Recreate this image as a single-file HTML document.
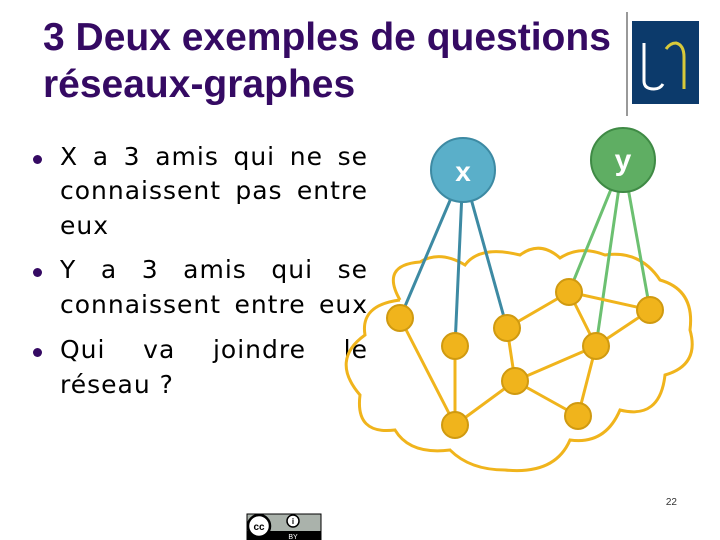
<!DOCTYPE html>
<html><head><meta charset="utf-8"><style>
body{margin:0;width:720px;height:540px;background:#fff;position:relative;overflow:hidden;font-family:"Liberation Sans",sans-serif}
.t{position:absolute;left:43px;font-weight:bold;font-size:39px;color:#350a63;white-space:nowrap}
.l{position:absolute;left:60px;width:308px;font-family:"DejaVu Sans","Liberation Sans",sans-serif;font-size:25px;letter-spacing:1px;color:#000;white-space:nowrap}
.j{text-align:justify;text-align-last:justify}
.b{position:absolute;left:33px;width:9px;height:9px;border-radius:50%;background:#350a63}
</style></head><body>
<div class="t" style="top:16px">3 Deux exemples de questions</div>
<div class="t" style="top:63px">réseaux-graphes</div>
<div style="position:absolute;left:626px;top:12px;width:2px;height:104px;background:#999"></div>
<div style="position:absolute;left:632px;top:21px;width:67px;height:83px;background:#0c3a6b"></div>
<svg style="position:absolute;left:632px;top:21px" width="67" height="83"><path d="M12 22 V60 Q12 68 22 68 Q28 68 31 63" stroke="#fff" stroke-width="3" fill="none"/><path d="M34 28 Q38 22 44 22 Q52 24 52 36 V68" stroke="#d8c93a" stroke-width="3" fill="none"/></svg>

<div class="b" style="top:155px"></div>
<div class="l j" style="top:142px">X a 3 amis qui ne se</div>
<div class="l j" style="top:176px">connaissent pas entre</div>
<div class="l" style="top:211px">eux</div>
<div class="b" style="top:268px"></div>
<div class="l j" style="top:255px">Y a 3 amis qui se</div>
<div class="l j" style="top:290px">connaissent entre eux</div>
<div class="b" style="top:348px"></div>
<div class="l j" style="top:335px">Qui va joindre le</div>
<div class="l" style="top:370px">réseau ?</div>

<svg style="position:absolute;left:0;top:0" width="720" height="540">
<g fill="none" stroke="#f0b41c" stroke-width="3">
<path d="M400 300 Q380 265 420 262 Q440 250 465 265 Q480 245 520 255 Q540 240 560 258 Q580 245 605 255 Q640 250 660 280 Q695 290 690 330 Q700 365 665 375 Q660 420 620 410 Q605 445 570 440 Q555 475 505 470 Q470 470 450 450 Q410 455 395 430 Q355 435 360 395 Q330 360 365 335 Q360 305 400 300"/>
</g>
<g stroke-width="3" fill="none">
<path d="M463 170 L400 318 M463 170 L455 346 M463 170 L507 328" stroke="#3d8aa3"/>
<path d="M623 160 L569 292 M623 160 L596 346 M623 160 L650 310" stroke="#6cc071"/>
<path d="M400 318 L455 425 M455 346 L455 425 M455 425 L515 381 M507 328 L515 381 M507 328 L569 292 M569 292 L650 310 M569 292 L596 346 M650 310 L596 346 M596 346 L515 381 M596 346 L578 416 M515 381 L578 416" stroke="#f0b41c"/>
</g>
<g fill="#f0b41c" stroke="#d09a10" stroke-width="2">
<circle cx="400" cy="318" r="13"/><circle cx="455" cy="346" r="13"/><circle cx="507" cy="328" r="13"/><circle cx="569" cy="292" r="13"/><circle cx="650" cy="310" r="13"/><circle cx="596" cy="346" r="13"/><circle cx="515" cy="381" r="13"/><circle cx="455" cy="425" r="13"/><circle cx="578" cy="416" r="13"/>
</g>
<circle cx="463" cy="170" r="32" fill="#5aafc9" stroke="#3d8aa3" stroke-width="2"/>
<circle cx="623" cy="160" r="32" fill="#5fae63" stroke="#3f8a45" stroke-width="2"/>
<text x="463" y="181" fill="#fff" font-family="Liberation Sans" font-weight="bold" font-size="28" text-anchor="middle">x</text>
<text x="623" y="170" fill="#fff" font-family="Liberation Sans" font-weight="bold" font-size="30" text-anchor="middle">y</text>
<text x="677" y="505" font-family="Liberation Sans" font-size="10" fill="#333" text-anchor="end">22</text>
<rect x="247" y="514" width="74" height="26" fill="#aab2ab" stroke="#000" stroke-width="1"/>
<rect x="247" y="531" width="74" height="9" fill="#000"/>
<circle cx="259" cy="526" r="11" fill="#fff" stroke="#000" stroke-width="2.5"/>
<text x="259" y="530" font-family="Liberation Sans" font-weight="bold" font-size="10" text-anchor="middle">cc</text>
<circle cx="293" cy="521" r="6" fill="#fff" stroke="#000" stroke-width="1.5"/>
<text x="293" y="524" font-family="Liberation Sans" font-weight="bold" font-size="8" text-anchor="middle">i</text>
<text x="293" y="539" font-family="Liberation Sans" font-size="7" fill="#fff" text-anchor="middle">BY</text>
</svg>
</body></html>
